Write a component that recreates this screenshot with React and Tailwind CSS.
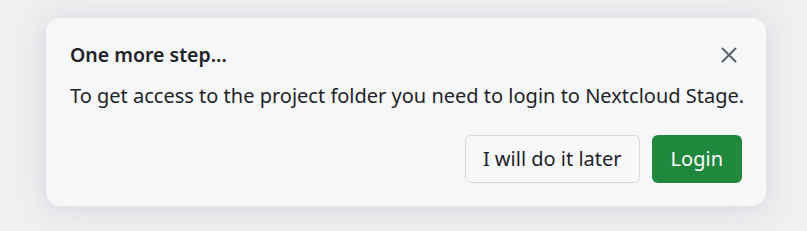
import React from 'react';

const CloseIcon = () => (
  <svg width="16" height="16" viewBox="0 0 16 16" fill="none" stroke="currentColor" strokeWidth="2" strokeLinecap="round">
    <path d="M1.5 1.5l13 13M14.5 1.5l-13 13" />
  </svg>
);

export default function App() {
  return (
    <div
      className="w-[807px] h-[231px] bg-[#eff0f2] pt-[18px] pl-[46px]"
      style={{ fontFamily: '"Noto Sans", "Open Sans", sans-serif' }}
    >
      <div className="w-[720px] h-[188px] bg-[#f6f7f9] rounded-[14px] shadow-[0_2px_28px_rgba(140,149,159,0.3)] px-6 pt-[23px] flex flex-col">
        <div className="flex items-center justify-between h-7">
          <h2 className="text-[19.5px] font-semibold text-[#1f2328] leading-7">One more step...</h2>
          <button className="text-[#59636e] w-4 h-4 mr-[5px] mt-[-1px]">
            <CloseIcon />
          </button>
        </div>
        <p className="mt-[13px] text-[20px] text-[#1f2328] leading-7 whitespace-nowrap">
          To get access to the project folder you need to login to Nextcloud Stage.
        </p>
        <div className="mt-[25px] flex justify-end gap-3">
          <button className="h-12 px-[17px] rounded-md border border-[#d5d9de] bg-[#f6f8fa] text-[20px] text-[#1f2328]">
            I will do it later
          </button>
          <button className="h-12 px-[19px] rounded-md bg-[#1f883d] text-[20px] text-white">
            Login
          </button>
        </div>
      </div>
    </div>
  );
}
